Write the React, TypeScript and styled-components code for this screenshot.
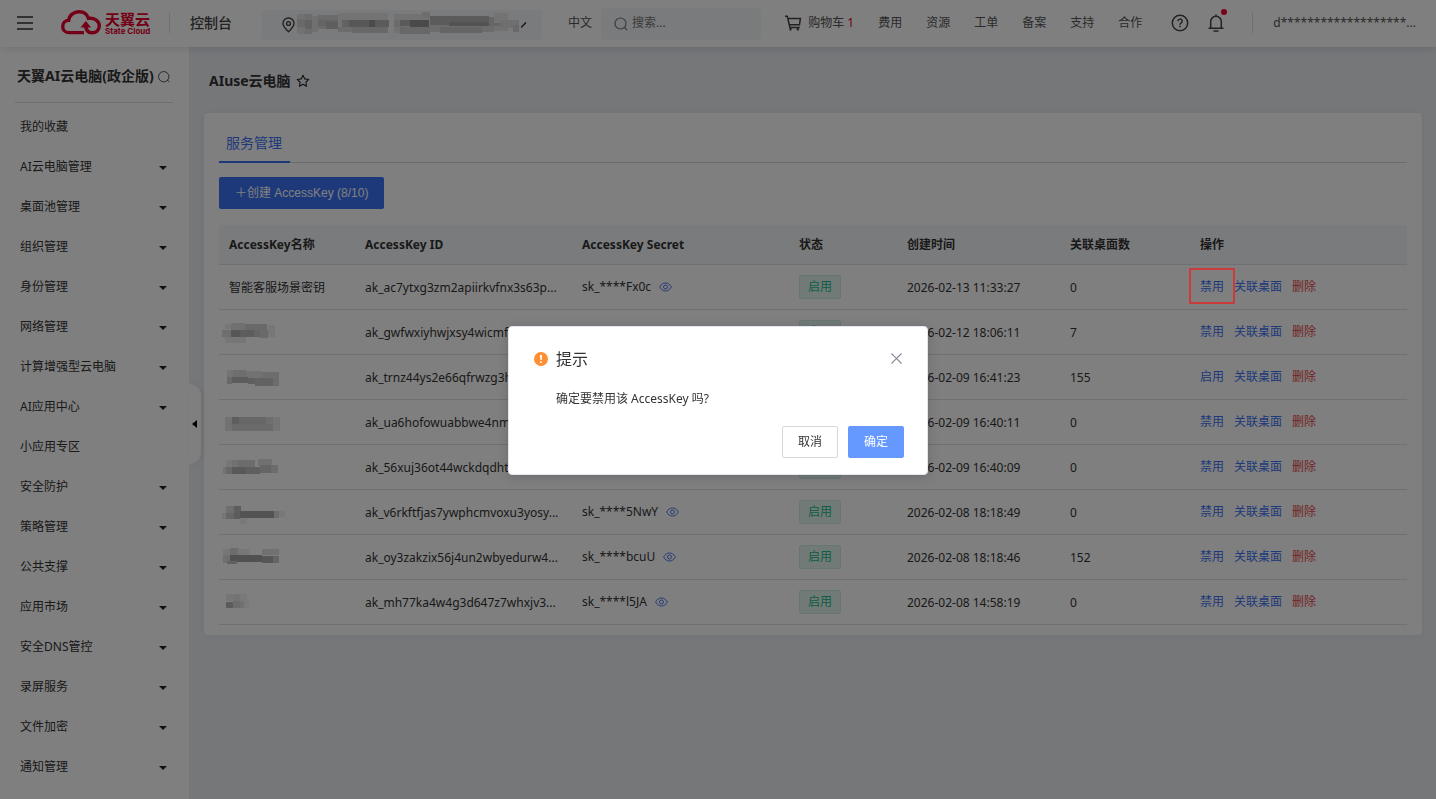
import React from "react";
import styled, { createGlobalStyle } from "styled-components";

const GlobalStyle = createGlobalStyle`
  *, *::before, *::after { box-sizing: border-box; }
  body {
    margin: 0;
    background: #eceef3;
    color: #333;
    font: 12px/18px "Noto Sans", "Noto Sans CJK SC", sans-serif;
  }
  button, input { font: inherit; color: inherit; }
  button { border: 0; padding: 0; background: none; cursor: pointer; }
  a { color: inherit; text-decoration: none; }
  svg { display: block; flex: none; }
`;

const Page = styled.div`
  min-height: 100vh;
  display: flex;
  flex-direction: column;
`;

/* ---------- top bar ---------- */

const Header = styled.header`
  position: relative;
  z-index: 2;
  display: flex;
  align-items: center;
  height: 47px;
  padding: 0 20px 2px 17px;
  background: #fff;
  box-shadow: 0 2px 8px rgba(0, 0, 0, 0.1);
  color: #555;
`;

const Logo = styled.a`
  display: flex;
  align-items: center;
  gap: 4px;
  margin-left: 28px;
  color: #e6002d;
`;

const LogoWords = styled.span`
  display: flex;
  flex-direction: column;
  width: 45px;
  padding-top: 1px;
  white-space: nowrap;
`;

const LogoName = styled.strong`
  font: 700 15px/16px "Noto Sans CJK SC", sans-serif;
`;

const LogoLatin = styled.span`
  font: 700 8px/9px Inter, sans-serif;
`;

const Divider = styled.span<{ $left: number; $right: number }>`
  width: 1px;
  height: 20px;
  margin: 0 ${(p) => p.$right}px 0 ${(p) => p.$left}px;
  background: #dcdde0;
`;

const ConsoleName = styled.span`
  color: #444;
  font-size: 14px;
  line-height: 20px;
  font-weight: 500;
`;

const RegionButton = styled.button`
  display: flex;
  align-items: center;
  width: 280px;
  height: 30px;
  margin: 4px 26px 0 30px;
  padding-left: 20px;
  gap: 2px;
  border-radius: 3px;
  background: #f5f7fa;
`;

const SearchBox = styled.label`
  display: flex;
  align-items: center;
  gap: 4px;
  width: 160px;
  height: 32px;
  margin: 2px 24px 0 9px;
  padding-left: 13px;
  border-radius: 3px;
  background: #f5f7fa;
`;

const SearchInput = styled.input`
  flex: 1;
  min-width: 0;
  padding: 0 0 2px;
  border: 0;
  outline: 0;
  background: none;
  &::placeholder { color: #757575; opacity: 1; }
`;

const TopNav = styled.nav`
  display: flex;
  align-items: center;
  gap: 24px;
  margin-left: auto;
  white-space: nowrap;
`;

const CartLink = styled.a`
  display: flex;
  align-items: center;
  gap: 6px;
  em { font-style: normal; color: #e6002d; }
`;

const IconTools = styled.div`
  display: flex;
  align-items: center;
  gap: 19px;
  margin-left: 5px;
  color: #444;
`;

const BellButton = styled.button`
  position: relative;
  &::after {
    content: "";
    position: absolute;
    top: -5px;
    right: -3px;
    width: 6px;
    height: 6px;
    border-radius: 50%;
    background: #f00030;
  }
`;

/* ---------- side menu ---------- */

const Body = styled.div`
  flex: 1;
  display: flex;
`;

const Sidebar = styled.aside`
  position: relative;
  flex: none;
  width: 189px;
  background: #fff;
`;

const SideTitle = styled.h2`
  display: flex;
  align-items: center;
  gap: 4px;
  height: 56px;
  margin: 0 16px 4px 15px;
  padding: 3px 0 0 2px;
  border-bottom: 1px solid #dcdde0;
  font-size: 14px;
  line-height: 20px;
  white-space: nowrap;
  svg { margin-top: 2px; }
`;

const Menu = styled.ul`
  margin: 0;
  padding: 0;
  list-style: none;
`;

const MenuItem = styled.button`
  display: flex;
  align-items: center;
  justify-content: space-between;
  width: 100%;
  height: 40px;
  padding: 0 22px 0 20px;
  text-align: left;
  svg { margin-top: 2px; }
`;

const CollapseHandle = styled.button`
  position: absolute;
  top: 337px;
  left: 100%;
  display: flex;
  align-items: center;
  width: 12px;
  height: 80px;
  padding-left: 3px;
  border-radius: 0 12px 12px 0;
  background: #fff;
  box-shadow: 2px 0 6px rgba(0, 0, 0, 0.06);
`;

/* ---------- main area ---------- */

const Main = styled.main`
  flex: 1;
  min-width: 0;
  padding: 0 14px 24px 15px;
`;

const PageTitle = styled.h1`
  display: flex;
  align-items: center;
  gap: 5px;
  height: 66px;
  margin: 0;
  padding: 2px 0 0 5px;
  font-size: 14px;
  line-height: 20px;
`;

const Card = styled.section`
  padding: 14px 15px 10px;
  border-radius: 4px;
  background: #fff;
  box-shadow: 0 0 6px rgba(0, 0, 0, 0.04);
`;

const Tabs = styled.div`
  display: flex;
  height: 36px;
  box-shadow: inset 0 -1px 0 #d4d6dc;
`;

const Tab = styled.button`
  height: 36px;
  padding: 0 8px 3px 7px;
  border-bottom: 2px solid #3d73f5;
  color: #3d73f5;
  font-size: 14px;
`;

const CreateButton = styled.button`
  display: block;
  height: 32px;
  margin: 14px 0 16px;
  padding: 0 16px;
  border-radius: 2px;
  background: #3d73f5;
  color: #fff;
  font: 12px/32px "Liberation Sans", "Noto Sans CJK SC", sans-serif;
`;

const Table = styled.table`
  width: 100%;
  table-layout: fixed;
  border-collapse: separate;
  border-spacing: 0;
`;

const HeadCell = styled.th`
  height: 40px;
  padding: 0 10px;
  border-bottom: 1px solid #dfe1e6;
  background: #f5f7fa;
  text-align: left;
  font-weight: 700;
`;

const Cell = styled.td<{ $raised?: boolean }>`
  height: 45px;
  padding: ${(p) => (p.$raised ? "0 10px" : "1px 10px 0")};
  border-bottom: 1px solid #dfe1e6;
  white-space: nowrap;
`;

const Secret = styled.span`
  display: flex;
  align-items: center;
  gap: 8px;
`;

const Status = styled.span`
  display: block;
  width: 42px;
  height: 24px;
  border: 1px solid #cdeee2;
  border-radius: 2px;
  background: #e3f5ee;
  color: #1abc8c;
  line-height: 21px;
  text-align: center;
`;

const Actions = styled.div`
  display: flex;
  gap: 10px;
`;

const ActionLink = styled.a<{ $danger?: boolean; $marked?: boolean }>`
  position: relative;
  color: ${(p) => (p.$danger ? "#e8474a" : "#3d73f5")};
  &::after {
    content: ${(p) => (p.$marked ? '""' : "none")};
    position: absolute;
    z-index: 11;
    inset: -10px -11px -8px;
    border: 2px solid #cb3b3a;
    border-radius: 1px;
  }
`;

/* ---------- dialog ---------- */

const Overlay = styled.div`
  position: fixed;
  z-index: 10;
  inset: 0;
  background: rgba(0, 0, 0, 0.5);
`;

const DialogLayer = styled.div`
  position: fixed;
  z-index: 12;
  inset: 0;
  display: flex;
  align-items: center;
  justify-content: center;
  padding-top: 2px;
`;

const Dialog = styled.section`
  width: 420px;
  padding: 20px 23px 16px 25px;
  border: 1px solid #e3e6ee;
  border-radius: 4px;
  background: #fff;
  box-shadow: 0 2px 12px rgba(0, 0, 0, 0.15);
`;

const DialogHead = styled.header`
  display: flex;
  align-items: center;
  gap: 8px;
`;

const DialogTitle = styled.h2`
  flex: 1;
  margin: 0;
  font-size: 16px;
  line-height: 24px;
  font-weight: 400;
`;

const DialogText = styled.p`
  margin: 19px 0 18px 22px;
`;

const DialogFoot = styled.footer`
  display: flex;
  justify-content: flex-end;
  gap: 10px;
`;

const DialogButton = styled.button<{ $primary?: boolean }>`
  width: 56px;
  height: 32px;
  border: 1px solid ${(p) => (p.$primary ? "#6699ff" : "#d6d8dd")};
  border-radius: 2px;
  background: ${(p) => (p.$primary ? "#6699ff" : "#fff")};
  color: ${(p) => (p.$primary ? "#fff" : "#333")};
`;

const CloseButton = styled.button`
  padding: 0 2px 2px 0;
`;

/* ---------- drawings ---------- */

const MenuIcon = () => (
  <svg width="16" height="14" stroke="#333" strokeWidth="1.6" aria-hidden="true">
    <path d="M0 1h16M0 7h16M0 13h16" />
  </svg>
);

const CloudLogo = () => (
  <svg width="40" height="25" viewBox="0 0 40 25" fill="none" stroke="#e6002d" strokeWidth="3.4" aria-hidden="true">
    <path d="M23 22.600H8.200C4.300 22.600 1.700 19.800 1.700 16.400c0-3.300 2.600-6 6-6.100C8.200 5.300 12.800 1.700 18 1.700c4.700 0 8.300 2.700 9.500 6.700 6.200-.6 10.800 2.600 10.800 7.500 0 4.100-3.200 6.900-7.100 6.900-5 0-6.600-4-6.600-8.300" />
    <path d="M19.500 17.500l5.300-6.500 5.300 6.500z" fill="#e6002d" stroke="none" />
  </svg>
);

const PinIcon = () => (
  <svg width="13" height="16" viewBox="0 0 13 16" fill="none" stroke="#444" strokeWidth="1.4" aria-hidden="true">
    <path d="M6.500 14.800C3.200 11.600 1 9.200 1 6.500a5.500 5.500 0 0 1 11 0c0 2.700-2.200 5.100-5.500 8.300z" />
    <circle cx="6.500" cy="6.500" r="1.900" />
  </svg>
);

const SearchIcon = () => (
  <svg width="14" height="14" viewBox="0 0 14 14" fill="none" stroke="#777" strokeWidth="1.2" aria-hidden="true">
    <circle cx="6.500" cy="6.500" r="5.500" />
    <path d="M10.500 10.500l2.600 2.600" />
  </svg>
);

const SideSearchIcon = () => (
  <svg width="12" height="12" viewBox="0 0 13 13" fill="none" stroke="#444" aria-hidden="true">
    <circle cx="6.200" cy="6.200" r="5.600" />
    <path d="M10 10l2.400 1.800" />
  </svg>
);

const CartIcon = () => (
  <svg width="17" height="16" viewBox="0 0 17 16" fill="none" stroke="#444" strokeWidth="1.500" aria-hidden="true">
    <path d="M0 1.300h2.300l2.600 11.200h9.900M3 3.400h12.400l-.9 6.400H4.400" />
    <path d="M5.500 13v2.500M12.800 13v2.500" strokeWidth="2" />
  </svg>
);

const HelpIcon = () => (
  <svg width="18" height="18" viewBox="0 0 18 18" fill="none" stroke="currentColor" strokeWidth="1.500" aria-hidden="true">
    <circle cx="9" cy="9" r="7.700" />
    <path d="M6.800 7.300a2.200 2.200 0 1 1 3.300 1.900c-.8.500-1.100.8-1.100 1.600M9 11.800v1.500" />
  </svg>
);

const BellIcon = () => (
  <svg width="16" height="18" viewBox="0 0 16 18" fill="none" stroke="currentColor" strokeWidth="1.500" aria-hidden="true">
    <path d="M.5 14.200h15M2.700 14V7.600a5.300 5.300 0 0 1 10.600 0V14M8 .5v2M5.500 17h5" />
  </svg>
);

const StarIcon = () => (
  <svg width="14" height="14" viewBox="0 0 14 14" fill="none" stroke="#222" strokeWidth="1.100" strokeLinejoin="round" aria-hidden="true">
    <path d="M7 1.200l1.750 3.700 4.050.550-2.950 2.800.730 4.050L7 10.350 3.420 12.300l.730-4.050L1.200 5.450l4.050-.550z" />
  </svg>
);

const Caret = () => (
  <svg width="8" height="4" aria-hidden="true">
    <path d="M0 0h8L4 4z" fill="#222" />
  </svg>
);

const EyeIcon = () => (
  <svg width="13" height="10" viewBox="0 0 13 10" fill="none" stroke="#4f78ee" aria-hidden="true">
    <path d="M.6 5C2 2.300 4.100 1 6.500 1s4.500 1.300 5.900 4c-1.400 2.700-3.500 4-5.900 4S2 7.700.6 5z" />
    <circle cx="6.500" cy="5" r="2" />
  </svg>
);

const WarnIcon = () => (
  <svg width="14" height="14" aria-hidden="true">
    <circle cx="7" cy="7" r="7" fill="#ff8f33" />
    <path d="M6 3h2l-.3 5H6.300zM6.200 9.200h1.600v1.700H6.200z" fill="#fff" />
  </svg>
);

const CloseIcon = () => (
  <svg width="11" height="11" stroke="#85889a" strokeWidth="1.100" aria-hidden="true">
    <path d="M.5.5l10 10M10.500.5l-10 10" />
  </svg>
);

/* Pixelated block that hides private text: x, y, width, height, grey level */
type Block = [number, number, number, number, number];

const Mosaic = ({ width, height, blocks }: { width: number; height: number; blocks: Block[] }) => (
  <svg width={width} height={height} shapeRendering="crispEdges" role="img" aria-label="已隐藏">
    {blocks.map(([x, y, w, h, g], i) => (
      <rect key={i} x={x} y={y} width={w} height={h} fill={`rgb(${g},${g},${g})`} />
    ))}
  </svg>
);

const regionBlocks: Block[] = [
  [0, 2, 8, 20, 228], [8, 2, 7, 20, 216], [0, 7, 8, 8, 210], [8, 8, 7, 9, 196], [15, 4, 6, 16, 224],
  [21, 3, 20, 14, 214], [21, 8, 20, 6, 200], [29, 10, 12, 7, 188], [41, 1, 50, 19, 230], [45, 8, 46, 7, 196],
  [52, 8, 20, 7, 174], [72, 8, 6, 7, 150], [78, 8, 14, 7, 182], [55, 15, 36, 6, 208], [41, 15, 14, 5, 216],
  [97, 2, 36, 19, 228], [97, 8, 10, 7, 214], [103, 8, 10, 6, 180], [113, 8, 19, 7, 148], [103, 15, 30, 7, 208],
  [125, 0, 8, 6, 220], [133, 4, 59, 9, 182], [133, 13, 64, 7, 216], [143, 15, 42, 6, 202], [152, 10, 40, 4, 164],
  [192, 5, 12, 9, 204], [197, 1, 14, 10, 230], [197, 14, 14, 5, 226], [204, 8, 18, 8, 222], [216, 13, 6, 7, 210],
];

const nameBlocks: Block[][] = [
  [],
  [[3, 1, 6, 5, 238], [9, 0, 14, 7, 226], [23, 1, 22, 6, 210], [0, 7, 9, 7, 220], [9, 7, 9, 7, 172], [18, 7, 14, 7, 186], [32, 7, 6, 7, 202], [38, 7, 8, 8, 212], [46, 2, 7, 12, 238], [3, 14, 21, 6, 236]],
  [[5, 2, 6, 7, 232], [11, 2, 13, 7, 220], [24, 3, 16, 7, 228], [40, 4, 17, 7, 218], [5, 9, 5, 7, 208], [10, 9, 16, 6, 184], [26, 10, 7, 6, 190], [33, 10, 18, 8, 196], [51, 11, 6, 7, 216]],
  [[3, 4, 7, 14, 228], [10, 4, 7, 7, 188], [17, 4, 27, 7, 206], [44, 4, 7, 7, 220], [10, 11, 41, 7, 212], [51, 4, 7, 14, 234]],
  [[4, 2, 6, 7, 238], [10, 2, 6, 7, 226], [16, 2, 17, 7, 216], [36, 1, 14, 7, 226], [1, 9, 9, 7, 230], [4, 9, 6, 7, 208], [10, 9, 14, 7, 178], [24, 9, 14, 7, 190], [38, 7, 11, 8, 202], [49, 7, 7, 8, 216]],
  [[4, 3, 8, 7, 222], [12, 3, 7, 7, 188], [0, 10, 4, 6, 236], [4, 10, 8, 6, 206], [12, 10, 6, 6, 184], [18, 8, 34, 7, 166], [52, 8, 5, 7, 220], [57, 8, 6, 6, 240], [18, 15, 7, 6, 242]],
  [[1, 1, 7, 7, 238], [8, 0, 8, 7, 218], [16, 1, 12, 6, 238], [40, 1, 17, 6, 226], [1, 7, 7, 8, 222], [8, 7, 32, 7, 162], [40, 8, 11, 7, 172], [51, 8, 6, 7, 202], [5, 13, 10, 3, 194]],
  [[4, 1, 8, 7, 236], [12, 1, 6, 7, 230], [18, 1, 7, 7, 242], [4, 9, 7, 6, 184], [11, 8, 7, 7, 216], [18, 8, 4, 7, 226], [22, 8, 5, 7, 244]],
];

const HiddenName = styled.span`
  display: block;
  margin-left: -7px;
  padding-top: 2px;
`;

/* ---------- data ---------- */

const topLinks = ["费用", "资源", "工单", "备案", "支持", "合作"];

const menu: { label: string; leaf?: boolean }[] = [
  { label: "我的收藏", leaf: true },
  { label: "AI云电脑管理" },
  { label: "桌面池管理" },
  { label: "组织管理" },
  { label: "身份管理" },
  { label: "网络管理" },
  { label: "计算增强型云电脑" },
  { label: "AI应用中心" },
  { label: "小应用专区", leaf: true },
  { label: "安全防护" },
  { label: "策略管理" },
  { label: "公共支撑" },
  { label: "应用市场" },
  { label: "安全DNS管控" },
  { label: "录屏服务" },
  { label: "文件加密" },
  { label: "通知管理" },
];

const columns = [
  { title: "AccessKey名称", width: 136 },
  { title: "AccessKey ID", width: 217 },
  { title: "AccessKey Secret", width: 217 },
  { title: "状态", width: 108 },
  { title: "创建时间", width: 163 },
  { title: "关联桌面数", width: 130 },
  { title: "操作", width: 217 },
];

const rows = [
  { name: "智能客服场景密钥", id: "ak_ac7ytxg3zm2apiirkvfnx3s63p...", secret: "sk_****Fx0c", on: true, time: "2026-02-13 11:33:27", desktops: 0 },
  { id: "ak_gwfwxiyhwjxsy4wicmf...", secret: "sk_****", on: true, time: "2026-02-12 18:06:11", desktops: 7 },
  { id: "ak_trnz44ys2e66qfrwzg3h...", secret: "sk_****", on: false, time: "2026-02-09 16:41:23", desktops: 155 },
  { id: "ak_ua6hofowuabbwe4nm...", secret: "sk_****", on: true, time: "2026-02-09 16:40:11", desktops: 0 },
  { id: "ak_56xuj36ot44wckdqdht...", secret: "sk_****", on: true, time: "2026-02-09 16:40:09", desktops: 0 },
  { id: "ak_v6rkftfjas7ywphcmvoxu3yosy...", secret: "sk_****5NwY", on: true, time: "2026-02-08 18:18:49", desktops: 0 },
  { id: "ak_oy3zakzix56j4un2wbyedurw4...", secret: "sk_****bcuU", on: true, time: "2026-02-08 18:18:46", desktops: 152 },
  { id: "ak_mh77ka4w4g3d647z7whxjv3...", secret: "sk_****l5JA", on: true, time: "2026-02-08 14:58:19", desktops: 0 },
];

function TopBar() {
  return (
    <Header>
      <button aria-label="菜单"><MenuIcon /></button>
      <Logo href="#">
        <CloudLogo />
        <LogoWords>
          <LogoName>天翼云</LogoName>
          <LogoLatin>State Cloud</LogoLatin>
        </LogoWords>
      </Logo>
      <Divider $left={19} $right={20} />
      <ConsoleName>控制台</ConsoleName>
      <RegionButton aria-label="区域">
        <PinIcon />
        <Mosaic width={222} height={26} blocks={regionBlocks} />
        <svg width="7" height="6" fill="none" stroke="#333" strokeWidth="1.500" aria-hidden="true">
          <path d="M0 5.500l5-5" />
        </svg>
      </RegionButton>
      <a href="#">中文</a>
      <SearchBox>
        <SearchIcon />
        <SearchInput placeholder="搜索..." aria-label="搜索" />
      </SearchBox>
      <TopNav>
        <CartLink href="#">
          <CartIcon />
          <span>购物车 <em>1</em></span>
        </CartLink>
        {topLinks.map((t) => <a href="#" key={t}>{t}</a>)}
        <IconTools>
          <button aria-label="帮助"><HelpIcon /></button>
          <BellButton aria-label="消息"><BellIcon /></BellButton>
        </IconTools>
      </TopNav>
      <Divider $left={28} $right={20} />
      <a href="#">d*******************...</a>
    </Header>
  );
}

function SideMenu() {
  return (
    <Sidebar>
      <SideTitle>天翼AI云电脑(政企版)<SideSearchIcon /></SideTitle>
      <Menu>
        {menu.map((m) => (
          <li key={m.label}>
            <MenuItem>{m.label}{!m.leaf && <Caret />}</MenuItem>
          </li>
        ))}
      </Menu>
      <CollapseHandle aria-label="收起">
        <svg width="5" height="8" aria-hidden="true"><path d="M5 0v8L0 4z" fill="#000" /></svg>
      </CollapseHandle>
    </Sidebar>
  );
}

function KeyTable() {
  return (
    <Table>
      <colgroup>{columns.map((c) => <col key={c.title} width={c.width} />)}</colgroup>
      <thead>
        <tr>{columns.map((c) => <HeadCell key={c.title}>{c.title}</HeadCell>)}</tr>
      </thead>
      <tbody>
        {rows.map((r, i) => (
          <tr key={r.id}>
            <Cell>
              {r.name ?? <HiddenName><Mosaic width={64} height={22} blocks={nameBlocks[i]} /></HiddenName>}
            </Cell>
            <Cell>{r.id}</Cell>
            <Cell $raised><Secret>{r.secret}<EyeIcon /></Secret></Cell>
            <Cell $raised><Status>{r.on ? "启用" : "禁用"}</Status></Cell>
            <Cell>{r.time}</Cell>
            <Cell>{r.desktops}</Cell>
            <Cell $raised>
              <Actions>
                <ActionLink href="#" $marked={i === 0}>{r.on ? "禁用" : "启用"}</ActionLink>
                <ActionLink href="#">关联桌面</ActionLink>
                <ActionLink href="#" $danger>删除</ActionLink>
              </Actions>
            </Cell>
          </tr>
        ))}
      </tbody>
    </Table>
  );
}

function ConfirmDialog() {
  return (
    <DialogLayer>
      <Dialog role="dialog" aria-modal="true" aria-labelledby="dialog-title">
        <DialogHead>
          <WarnIcon />
          <DialogTitle id="dialog-title">提示</DialogTitle>
          <CloseButton aria-label="关闭"><CloseIcon /></CloseButton>
        </DialogHead>
        <DialogText>确定要禁用该 AccessKey 吗?</DialogText>
        <DialogFoot>
          <DialogButton>取消</DialogButton>
          <DialogButton $primary>确定</DialogButton>
        </DialogFoot>
      </Dialog>
    </DialogLayer>
  );
}

export default function App() {
  return (
    <>
      <GlobalStyle />
      <Page>
        <TopBar />
        <Body>
          <SideMenu />
          <Main>
            <PageTitle>AIuse云电脑<StarIcon /></PageTitle>
            <Card>
              <Tabs role="tablist"><Tab role="tab" aria-selected="true">服务管理</Tab></Tabs>
              <CreateButton>＋创建 AccessKey (8/10)</CreateButton>
              <KeyTable />
            </Card>
          </Main>
        </Body>
      </Page>
      <Overlay />
      <ConfirmDialog />
    </>
  );
}
